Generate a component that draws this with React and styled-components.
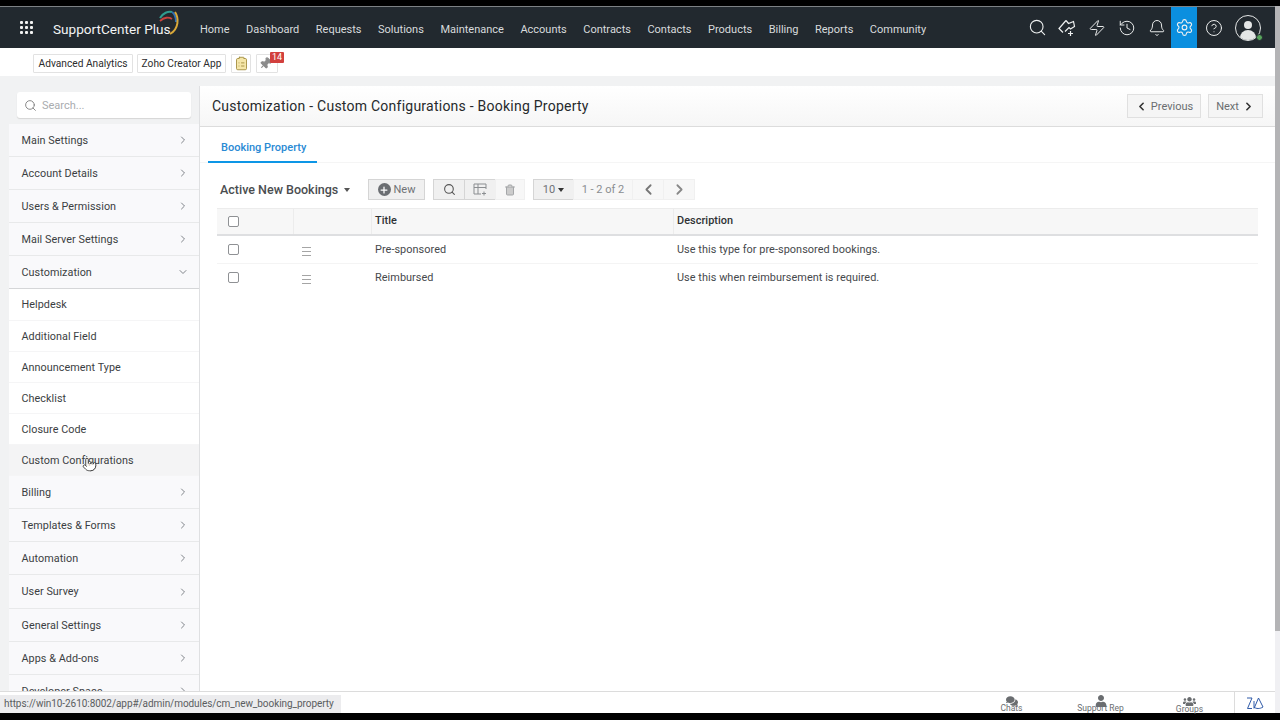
import React from "react";
import styled, { createGlobalStyle } from "styled-components";
import {
  Search,
  Zap,
  History,
  Bell,
  Settings,
  CircleHelp,
  ChevronRight,
  ChevronLeft,
  ChevronDown,
  Trash2,
  Plus,
  Pointer,
  Pin,
  ClipboardList,
} from "lucide-react";
import { FaComments, FaUser, FaUsers } from "react-icons/fa";

const GlobalStyle = createGlobalStyle`
  html, body {
    margin: 0;
    height: 100%;
    overflow: hidden;
    background: #000;
    font-family: Roboto, "Liberation Sans", sans-serif;
  }
  * { box-sizing: border-box; }
`;

const Frame = styled.div`
  width: 1280px;
  height: 720px;
  display: flex;
  flex-direction: column;
  background: #000;
  position: relative;
`;

const BlackEdge = styled.div`
  flex: none;
  height: ${({ $h }) => $h}px;
  background: #000;
`;

const Screen = styled.div`
  flex: 1;
  min-height: 0;
  display: flex;
`;

const Page = styled.div`
  flex: 1;
  min-width: 0;
  display: flex;
  flex-direction: column;
  background: #f1f2f3;
`;

const ScrollTrack = styled.div`
  flex: none;
  width: 5px;
  background: #f0f0f3;
`;

const ScrollThumb = styled.div`
  height: 625px;
  background: #b4b4b6;
`;

const Header = styled.header`
  flex: none;
  height: 42px;
  border-top: 1px solid #7d8184;
  background: #22292f;
  display: flex;
  align-items: center;
  color: #d8dbdd;
`;

const AppGrid = styled.div`
  display: grid;
  grid-template-columns: repeat(3, 3px);
  gap: 2px;
  margin-left: 20px;
  span {
    width: 3px;
    height: 3px;
    border-radius: 1px;
    background: #f2f2f2;
  }
`;

const Logo = styled.div`
  position: relative;
  width: 131px;
  margin-left: 20px;
  font-size: 13.6px;
  color: #f3f4f4;
  white-space: nowrap;
  padding-top: 3px;
  svg {
    position: absolute;
    left: 104px;
    top: -9px;
  }
`;

const Nav = styled.nav`
  display: flex;
  gap: 16.5px;
  margin-left: 16px;
  font-size: 11px;
  padding-top: 3px;
`;

const HeaderIcons = styled.div`
  margin-left: auto;
  display: flex;
  align-items: center;
  height: 100%;
  margin-right: 14px;
`;

const IconCell = styled.div`
  width: ${({ $w }) => $w || 30}px;
  height: 100%;
  display: flex;
  align-items: center;
  justify-content: center;
  background: ${({ $active }) => ($active ? "#0b8fdf" : "transparent")};
  color: #eef0f0;
`;

const Avatar = styled.div`
  position: relative;
  width: 26px;
  height: 26px;
  margin-left: 5px;
  border-radius: 50%;
  border: 1.5px solid #e4e6e6;
  overflow: hidden;
  &::before {
    content: "";
    position: absolute;
    left: 8px;
    top: 5px;
    width: 8px;
    height: 8px;
    border-radius: 50%;
    background: #e4e6e6;
  }
  &::after {
    content: "";
    position: absolute;
    left: 4px;
    top: 14px;
    width: 16px;
    height: 12px;
    border-radius: 8px 8px 0 0;
    background: #e4e6e6;
  }
`;

const AvatarWrap = styled.div`
  position: relative;
  width: 31px;
`;

const OnlineDot = styled.span`
  position: absolute;
  right: -2px;
  bottom: 0;
  width: 7px;
  height: 7px;
  border-radius: 50%;
  background: #58a55c;
  border: 1px solid #22292f;
`;

const QuickBar = styled.div`
  flex: none;
  height: 28px;
  background: #fff;
  display: flex;
  align-items: center;
  gap: 4px;
  padding-left: 33px;
  padding-top: 2px;
`;

const QuickButton = styled.div`
  position: relative;
  height: 19px;
  width: ${({ $w }) => $w}px;
  margin-left: ${({ $gap }) => $gap || 0}px;
  border: 1px solid #e2e2e2;
  background: #fff;
  display: flex;
  align-items: center;
  justify-content: center;
  font-size: 10.2px;
  color: #2c2c2c;
  white-space: nowrap;
  border-radius: 1px;
`;

const TiltedPin = styled(Pin)`
  transform: rotate(45deg);
  margin-right: 3px;
  color: #8b8b8b;
`;

const Badge = styled.span`
  position: absolute;
  left: 13px;
  top: -3px;
  height: 11px;
  width: 14px;
  background: #d2403d;
  color: #fff;
  font-size: 9px;
  line-height: 11px;
  text-align: center;
  border-radius: 1px;
`;

const Body = styled.div`
  flex: 1;
  min-height: 0;
  display: flex;
  margin-top: 10px;
  padding-left: 9px;
`;

const Sidebar = styled.aside`
  flex: none;
  width: 191px;
  border-right: 1px solid #dfe0e2;
  overflow: hidden;
  background: #f9f9fb;
`;

const SearchArea = styled.div`
  height: 38px;
  background: #f1f2f3;
  padding: 6px 8px 0 8px;
`;

const SearchBox = styled.div`
  height: 26px;
  background: #fff;
  border-radius: 3px;
  box-shadow: 0 1px 1px #d5d5d5;
  display: flex;
  align-items: center;
  gap: 5px;
  padding-left: 7px;
  font-size: 11px;
  color: #a9acaf;
  svg { color: #777; }
`;

const MenuRow = styled.div`
  height: ${({ $h }) => $h || 33}px;
  padding: 0 10px 0 12.5px;
  display: flex;
  align-items: center;
  justify-content: space-between;
  font-size: 10.8px;
  letter-spacing: 0.05px;
  color: #3b3e42;
  border-bottom: 1px solid ${({ $open }) => ($open ? "#d5d6d8" : "#e8e9ea")};
  svg { color: #80848a; }
`;

const SubRow = styled.div`
  position: relative;
  height: ${({ $h }) => $h || 31}px;
  padding-left: 12.5px;
  padding-top: ${({ $hover }) => ($hover ? 1 : 0)}px;
  display: flex;
  align-items: center;
  font-size: 10.8px;
  letter-spacing: 0.05px;
  color: #3b3e42;
  background: ${({ $hover }) => ($hover ? "#f4f4f5" : "#fff")};
  border-bottom: 1px solid #f5f5f6;
`;

const HandCursor = styled.div`
  position: absolute;
  left: 73px;
  top: 12px;
  line-height: 0;
  color: #333;
`;

const Content = styled.main`
  flex: 1;
  min-width: 0;
  background: #fff;
  display: flex;
  flex-direction: column;
`;

const TitleBar = styled.div`
  flex: none;
  height: 41px;
  padding: 0 12px;
  display: flex;
  align-items: center;
  background: linear-gradient(#fff, #f6f6f6);
  border-bottom: 1px solid #dcdcdc;
`;

const PageTitle = styled.h1`
  margin: 0;
  font-size: 14px;
  font-weight: 400;
  letter-spacing: 0.24px;
  color: #26292c;
`;

const PagerLinks = styled.div`
  margin-left: auto;
  display: flex;
  gap: 7px;
`;

const PagerLink = styled.div`
  width: ${({ $w }) => $w}px;
  height: 24px;
  display: flex;
  align-items: center;
  justify-content: center;
  gap: 3px;
  border: 1px solid #e0e0e0;
  background: #f5f5f5;
  font-size: 11px;
  color: #6a6d70;
  svg { color: #333; }
`;

const Tabs = styled.div`
  flex: none;
  height: 36px;
  padding-left: 8px;
  border-bottom: 1px solid #f5f5f5;
  display: flex;
`;

const Tab = styled.div`
  width: 109px;
  height: 36px;
  padding: 14px 0 0 13px;
  border-bottom: 2px solid #0d96e6;
  font-size: 11px;
  font-weight: 500;
  color: #2a8ad4;
`;

const Actions = styled.div`
  flex: none;
  height: 21px;
  margin: 16px 0 0 20px;
  display: flex;
  align-items: center;
`;

const ViewName = styled.div`
  display: flex;
  align-items: center;
  gap: 6px;
  width: 149px;
  font-size: 12.5px;
  font-weight: 500;
  color: #4a4d50;
`;

const Caret = styled.span`
  width: 0;
  height: 0;
  border-left: 3.5px solid transparent;
  border-right: 3.5px solid transparent;
  border-top: 4px solid ${({ $color }) => $color || "#555"};
`;

const ActionGroup = styled.div`
  display: flex;
  height: 21px;
  margin-right: ${({ $mr }) => $mr || 0}px;
`;

const ActionBtn = styled.div`
  width: ${({ $w }) => $w}px;
  height: 21px;
  display: flex;
  align-items: center;
  justify-content: center;
  gap: 3px;
  font-size: 11px;
  color: ${({ $dim }) => ($dim ? "#8a8d90" : "#6f7276")};
  background: ${({ $flat }) => ($flat ? "#f7f7f7" : "#f0f0f0")};
  border: 1px solid ${({ $flat }) => ($flat ? "#f0f0f0" : "#d5d5d5")};
  margin-left: -1px;
`;

const PlusDot = styled.span`
  width: 13px;
  height: 13px;
  border-radius: 50%;
  background: #6b6e72;
  color: #fff;
  display: flex;
  align-items: center;
  justify-content: center;
`;

const Table = styled.div`
  margin: 8px 17px 0 17px;
`;

const TableRow = styled.div`
  display: grid;
  grid-template-columns: 77px 78px 302px 1fr;
  height: 28px;
  background: ${({ $head }) => ($head ? "#f7f7f7" : "#fff")};
  border-top: ${({ $head }) => ($head ? "1px solid #ececec" : "none")};
  border-bottom: ${({ $head }) => ($head ? "2px solid #dedfe1" : "1px solid #f4f4f4")};
  font-size: 10.9px;
  font-weight: ${({ $head }) => ($head ? 500 : 400)};
  color: ${({ $head }) => ($head ? "#2e3134" : "#46494c")};
  letter-spacing: 0.05px;
  &:last-child { border-bottom-color: transparent; }
`;

const Cell = styled.div`
  display: flex;
  align-items: center;
  padding-left: ${({ $pl }) => $pl || 3}px;
  padding-bottom: ${({ $up }) => $up || 0}px;
  border-right: ${({ $line }) => ($line ? "1px solid #ececec" : "none")};
`;

const Check = styled.span`
  width: 11px;
  height: 11px;
  border: 1px solid #8f9194;
  border-radius: 2px;
  background: #fff;
`;

const DragHandle = styled.span`
  width: 9px;
  height: 9px;
  margin-top: 4px;
  border-top: 1px solid #a5a5a5;
  border-bottom: 1px solid #a5a5a5;
  position: relative;
  &::after {
    content: "";
    position: absolute;
    left: 0;
    right: 0;
    top: 3px;
    height: 1px;
    background: #a5a5a5;
  }
`;

const Spacer = styled.div`
  flex: 1;
`;

const StatusBar = styled.footer`
  position: relative;
  flex: none;
  height: 22px;
  background: #fff;
  border-top: 1px solid #dcdcdc;
  display: flex;
  justify-content: flex-end;
`;

const LinkTip = styled.div`
  position: absolute;
  left: 0;
  bottom: 0;
  width: 341px;
  height: 18px;
  background: #ececee;
  font-size: 10px;
  letter-spacing: -0.06px;
  line-height: 18px;
  padding-left: 4px;
  color: #5a5d60;
  white-space: nowrap;
`;

const Dock = styled.div`
  width: 89px;
  display: flex;
  flex-direction: column;
  align-items: center;
  font-size: 8.5px;
  line-height: 9px;
  color: #6a6d70;
  padding-top: 3px;
  svg { color: #6a6d70; flex: none; margin-bottom: -3px; }
`;

const ZiaCell = styled.div`
  width: 41px;
  border-left: 1px solid #dcdcdc;
  display: flex;
  align-items: center;
  justify-content: center;
`;

const navItems = ["Home", "Dashboard", "Requests", "Solutions", "Maintenance", "Accounts", "Contracts", "Contacts", "Products", "Billing", "Reports", "Community"];
const topItems = ["Main Settings", "Account Details", "Users & Permission", "Mail Server Settings"];
const subItems = [
  { label: "Helpdesk", h: 32 },
  { label: "Additional Field" },
  { label: "Announcement Type" },
  { label: "Checklist" },
  { label: "Closure Code" },
];
const lowerItems = [
  { label: "Billing" },
  { label: "Templates & Forms" },
  { label: "Automation" },
  { label: "User Survey", h: 34 },
  { label: "General Settings" },
  { label: "Apps & Add-ons" },
  { label: "Developer Space" },
];
const rows = [
  { title: "Pre-sponsored", text: "Use this type for pre-sponsored bookings." },
  { title: "Reimbursed", text: "Use this when reimbursement is required." },
];

function LogoArc() {
  return (
    <svg width="24" height="28" viewBox="0 0 24 28" fill="none">
      <path d="M3 9C6 4 11 2 15 3" stroke="#2f9c8f" strokeWidth="2" />
      <path d="M3 12C7 8 12 8 15 10" stroke="#c8433e" strokeWidth="1.8" />
      <path d="M15 3C18 5 19 9 19 13" stroke="#2f6fb5" strokeWidth="2" />
      <path d="M18 3C22 9 22 20 13 25" stroke="#d9a93a" strokeWidth="2" />
    </svg>
  );
}

function TicketIcon() {
  return (
    <svg width="18" height="18" viewBox="0 0 18 18" fill="none" stroke="currentColor" strokeWidth="1.2">
      <path d="M8 1.500 1 9.500l4 4" />
      <path d="M8 1.500l2.500 3 5-2 1 5-4 2.500-1.500-1.500-4 4" />
      <path d="M12.500 12v5M10 14.500h5" />
    </svg>
  );
}

function TableAddIcon() {
  return (
    <svg width="15" height="13" viewBox="0 0 15 13" fill="none" stroke="#8b8e91" strokeWidth="1">
      <path d="M1 1h12v5M1 1v10h7M1 4.500h12M5 1v10" />
      <path d="M11 8.500v4M9 10.500h4" />
    </svg>
  );
}

function ZiaMark() {
  return (
    <svg width="18" height="14" viewBox="0 0 18 14" fill="none" stroke="#2f5aa8" strokeWidth="1">
      <path d="M1 2h5L1.500 12.500H6" />
      <path d="M8 5v7" />
      <path d="M8 12.500 12.500 2 17 11c-3 2-7 2-9 0" />
    </svg>
  );
}

export default function App() {
  return (
    <Frame>
      <GlobalStyle />
      <BlackEdge $h={6} />
      <Screen>
        <Page>
          <Header>
            <AppGrid>
              {Array.from({ length: 9 }, (_, i) => <span key={i} />)}
            </AppGrid>
            <Logo>
              SupportCenter Plus
              <LogoArc />
            </Logo>
            <Nav>
              {navItems.map((item) => <span key={item}>{item}</span>)}
            </Nav>
            <HeaderIcons>
              <IconCell><Search size={19} strokeWidth={1.4} /></IconCell>
              <IconCell><TicketIcon /></IconCell>
              <IconCell><Zap size={18} strokeWidth={1.3} /></IconCell>
              <IconCell><History size={18} strokeWidth={1.3} /></IconCell>
              <IconCell $w={29}><Bell size={18} strokeWidth={1.3} /></IconCell>
              <IconCell $w={26} $active><Settings size={19} strokeWidth={1.4} /></IconCell>
              <IconCell $w={33}><CircleHelp size={18} strokeWidth={1.3} /></IconCell>
              <AvatarWrap>
                <Avatar />
                <OnlineDot />
              </AvatarWrap>
            </HeaderIcons>
          </Header>

          <QuickBar>
            <QuickButton $w={100}>Advanced Analytics</QuickButton>
            <QuickButton $w={89}>Zoho Creator App</QuickButton>
            <QuickButton $w={20} $gap={1}>
              <ClipboardList size={15} color="#a08a3c" fill="#f5e6a8" strokeWidth={1.4} />
            </QuickButton>
            <QuickButton $w={22} $gap={1}>
              <TiltedPin size={13} fill="#8b8b8b" />
              <Badge>14</Badge>
            </QuickButton>
          </QuickBar>

          <Body>
            <Sidebar>
              <SearchArea>
                <SearchBox>
                  <Search size={13} strokeWidth={1.6} />
                  Search...
                </SearchBox>
              </SearchArea>
              {topItems.map((item) => (
                <MenuRow key={item}>
                  {item}
                  <ChevronRight size={12} />
                </MenuRow>
              ))}
              <MenuRow $open>
                Customization
                <ChevronDown size={12} />
              </MenuRow>
              {subItems.map((item) => (
                <SubRow key={item.label} $h={item.h}>{item.label}</SubRow>
              ))}
              <SubRow $hover>
                Custom Configurations
                <HandCursor>
                  <Pointer size={15} fill="#fff" strokeWidth={1.4} />
                </HandCursor>
              </SubRow>
              {lowerItems.map((item) => (
                <MenuRow key={item.label} $h={item.h}>
                  {item.label}
                  <ChevronRight size={12} />
                </MenuRow>
              ))}
            </Sidebar>

            <Content>
              <TitleBar>
                <PageTitle>Customization - Custom Configurations - Booking Property</PageTitle>
                <PagerLinks>
                  <PagerLink $w={74}>
                    <ChevronLeft size={13} strokeWidth={3} />
                    Previous
                  </PagerLink>
                  <PagerLink $w={55}>
                    Next
                    <ChevronRight size={13} strokeWidth={3} />
                  </PagerLink>
                </PagerLinks>
              </TitleBar>

              <Tabs>
                <Tab>Booking Property</Tab>
              </Tabs>

              <Actions>
                <ViewName>
                  Active New Bookings
                  <Caret />
                </ViewName>
                <ActionGroup $mr={9}>
                  <ActionBtn $w={57}>
                    <PlusDot><Plus size={10} strokeWidth={3} /></PlusDot>
                    New
                  </ActionBtn>
                </ActionGroup>
                <ActionGroup $mr={9}>
                  <ActionBtn $w={32}><Search size={13} color="#555" /></ActionBtn>
                  <ActionBtn $w={32}><TableAddIcon /></ActionBtn>
                  <ActionBtn $w={30} $flat><Trash2 size={12} color="#a5a7a9" fill="#ccc" /></ActionBtn>
                </ActionGroup>
                <ActionGroup>
                  <ActionBtn $w={41}>
                    10
                    <Caret $color="#333" />
                  </ActionBtn>
                  <ActionBtn $w={60} $flat $dim>1 - 2 of 2</ActionBtn>
                  <ActionBtn $w={32} $flat><ChevronLeft size={17} color="#777" strokeWidth={2.5} /></ActionBtn>
                  <ActionBtn $w={32} $flat><ChevronRight size={17} color="#888" strokeWidth={2.5} /></ActionBtn>
                </ActionGroup>
              </Actions>

              <Table>
                <TableRow $head>
                  <Cell $pl={11} $line><Check /></Cell>
                  <Cell $line />
                  <Cell $line $up={3}>Title</Cell>
                  <Cell $up={3}>Description</Cell>
                </TableRow>
                {rows.map((row) => (
                  <TableRow key={row.title}>
                    <Cell $pl={11}><Check /></Cell>
                    <Cell $pl={8}><DragHandle /></Cell>
                    <Cell $up={1}>{row.title}</Cell>
                    <Cell $up={1}>{row.text}</Cell>
                  </TableRow>
                ))}
              </Table>
              <Spacer />
            </Content>
          </Body>

          <StatusBar>
            <LinkTip>https://win10-2610:8002/app#/admin/modules/cm_new_booking_property</LinkTip>
            <Dock><FaComments size={12} />Chats</Dock>
            <Dock><FaUser size={12} />Support Rep</Dock>
            <Dock><FaUsers size={13} />Groups</Dock>
            <ZiaCell><ZiaMark /></ZiaCell>
          </StatusBar>
        </Page>
        <ScrollTrack>
          <ScrollThumb />
        </ScrollTrack>
      </Screen>
      <BlackEdge $h={7} />
    </Frame>
  );
}
